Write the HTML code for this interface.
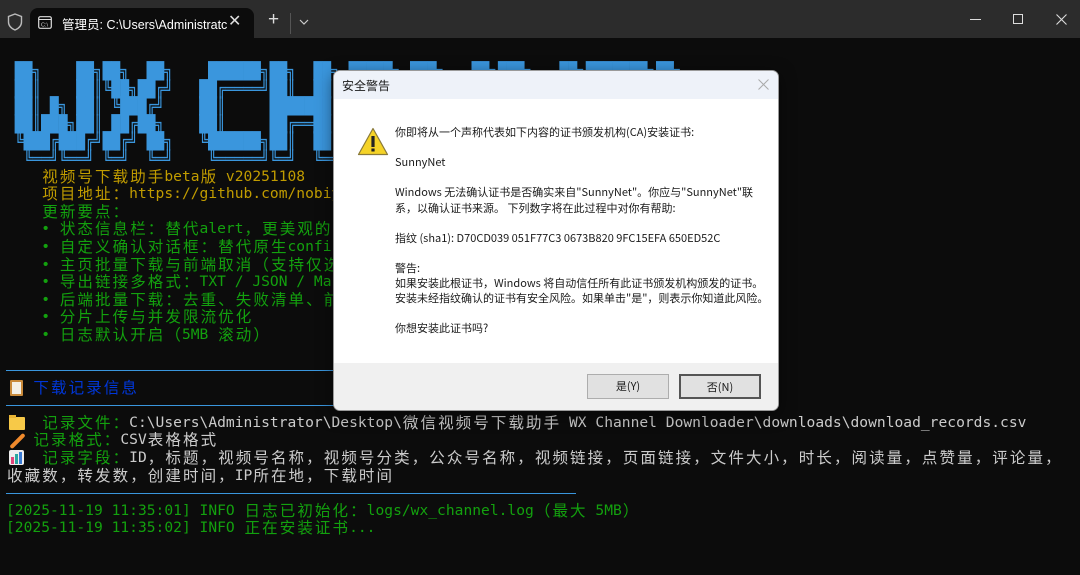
<!DOCTYPE html>
<html><head><meta charset="utf-8">
<style>
*{margin:0;padding:0;box-sizing:border-box}
html,body{width:1080px;height:575px;overflow:hidden;background:#0c0c0c}
#bar{position:absolute;left:0;top:0;width:1080px;height:38px;background:#2c2c2c}
#tab{position:absolute;left:30px;top:8px;width:224px;height:31px;background:#0c0c0c;border-radius:8px 8px 0 0}
.ui{font-family:"Liberation Sans","Noto Sans CJK SC",sans-serif;color:#fff;position:absolute}
#term{position:absolute;left:6px;top:62px;font-family:"DejaVu Sans Mono","Liberation Mono","Noto Sans CJK SC",monospace;font-size:14.6px;line-height:17.6px;color:#ccc;white-space:normal}
.row{height:17.6px;position:relative;white-space:pre;overflow:visible;line-height:17.6px}
.c{display:inline-block;width:8.8px;height:17.6px;line-height:17.6px;vertical-align:top;overflow:visible}
.w{display:inline-block;width:17.6px;height:17.6px;line-height:17.6px;vertical-align:top;font-family:"Noto Sans CJK SC",sans-serif;font-size:15.5px;text-align:center;overflow:visible}
.art{color:#3a96dd;font-family:"DejaVu Sans Mono",monospace;font-size:14.6px;line-height:17.6px;white-space:normal}
.art .row{transform:scaleY(1.12);transform-origin:top}
.y{color:#c19c00}.g{color:#13a10e}.b{color:#0037da}.wh{color:#ccc}
.sep{position:absolute;left:6px;width:570px;height:1px;background:#3a96dd}
#dlg{position:absolute;left:333px;top:70px;width:446px;height:341px;background:#fff;border:1px solid #9a9a9a;border-radius:7px;overflow:hidden;box-shadow:0 4px 16px rgba(0,0,0,.5);font-family:"Noto Sans CJK SC","Liberation Sans",sans-serif;color:#1a1a1a;font-size:11px}
#dlg .t{position:absolute;left:0;top:0;width:100%;height:28px;background:#eef2f9}
#dlg p{position:absolute;left:61px;white-space:nowrap;line-height:15px}
#dlg .bot{position:absolute;left:0;top:292px;width:100%;height:50px;background:#f0f0f0}
.btn{position:absolute;top:11px;width:82px;height:25px;border:1px solid #adadad;background:#e1e1e1;text-align:center;line-height:23px;font-size:11px}
</style></head><body>
<div id="bar"></div>
<div id="tab"></div>
<svg class="ui" style="left:7px;top:13px" width="16" height="18" viewBox="0 0 16 18"><path d="M8 1 L14.5 3.5 V9 C14.5 13 11.5 15.5 8 17 C4.5 15.5 1.5 13 1.5 9 V3.5 Z" fill="none" stroke="#bbb" stroke-width="1.4"/></svg>
<svg class="ui" style="left:38px;top:16px" width="14" height="13" viewBox="0 0 14 13"><rect x="0.7" y="0.7" width="12.6" height="11.6" rx="1.5" fill="none" stroke="#ddd" stroke-width="1.2"/><line x1="1" y1="3.5" x2="13" y2="3.5" stroke="#ddd"/><text x="3" y="10.5" font-size="5.5" fill="#ddd" font-family="Liberation Sans">C:\</text></svg>
<div class="ui" style="left:62px;top:14px;font-size:12.5px;white-space:nowrap">管理员: C:\Users\Administratc</div>
<div class="ui" style="left:228px;top:11px;font-size:16px;color:#ddd">✕</div>
<div class="ui" style="left:268px;top:9px;font-size:19px;color:#ddd">+</div>
<div style="position:absolute;left:290px;top:13px;width:1px;height:21px;background:#555"></div>
<svg class="ui" style="left:299px;top:19px" width="10" height="6"><path d="M1 1 L5 5 L9 1" fill="none" stroke="#ccc" stroke-width="1.2"/></svg>
<div style="position:absolute;left:970px;top:19px;width:11px;height:1px;background:#ddd"></div>
<div style="position:absolute;left:1013px;top:14px;width:10px;height:10px;border:1px solid #ddd"></div>
<svg class="ui" style="left:1056px;top:14px" width="11" height="11"><path d="M0.5 0.5 L10.5 10.5 M10.5 0.5 L0.5 10.5" stroke="#ddd" stroke-width="1.1"/></svg>

<div id="term"><div class="art"><div class="row"> ██╗    ██╗██╗  ██╗    ██████╗██╗  ██╗ █████╗ ███╗   ██╗███╗   ██╗███████╗██╗     </div><div class="row"> ██║    ██║╚██╗██╔╝   ██╔════╝██║  ██║██╔══██╗████╗  ██║████╗  ██║██╔════╝██║     </div><div class="row"> ██║ █╗ ██║ ╚███╔╝    ██║     ███████║███████║██╔██╗ ██║██╔██╗ ██║█████╗  ██║     </div><div class="row"> ██║███╗██║ ██╔██╗    ██║     ██╔══██║██╔══██║██║╚██╗██║██║╚██╗██║██╔══╝  ██║     </div><div class="row"> ╚███╔███╔╝██╔╝ ██╗   ╚██████╗██║  ██║██║  ██║██║ ╚████║██║ ╚████║███████╗███████╗</div><div class="row">  ╚══╝╚══╝ ╚═╝  ╚═╝    ╚═════╝╚═╝  ╚═╝╚═╝  ╚═╝╚═╝  ╚═══╝╚═╝  ╚═══╝╚══════╝╚══════╝</div></div><div class="row" data-t="y">    视频号下载助手beta版 v20251108</div><div class="row" data-t="y">    项目地址：https://github.com/nobiyou/wx_channel</div><div class="row" data-t="g">    更新要点：</div><div class="row" data-t="g">    • 状态信息栏：替代alert，更美观的提示</div><div class="row" data-t="g">    • 自定义确认对话框：替代原生confirm</div><div class="row" data-t="g">    • 主页批量下载与前端取消（支持仅选中）</div><div class="row" data-t="g">    • 导出链接多格式：TXT / JSON / Markdown</div><div class="row" data-t="g">    • 后端批量下载：去重、失败清单、前端取消</div><div class="row" data-t="g">    • 分片上传与并发限流优化</div><div class="row" data-t="g">    • 日志默认开启（5MB 滚动）</div><div class="row"></div><div class="row"></div><div class="row" data-t="b">   下载记录信息</div><div class="row"></div><div class="row" id="r1"></div><div class="row" id="r2"></div><div class="row" id="r3"></div><div class="row" data-t="wh">收藏数，转发数，创建时间，IP所在地，下载时间</div><div class="row"></div><div class="row" data-t="g">[2025-11-19 11:35:01] INFO 日志已初始化：logs/wx_channel.log（最大 5MB）</div><div class="row" data-t="g">[2025-11-19 11:35:02] INFO 正在安装证书...</div></div>
<div class="sep" style="top:370px"></div>
<div class="sep" style="top:405px"></div>
<div class="sep" style="top:493px"></div>
<!-- icons -->
<div style="position:absolute;left:10px;top:380px;width:13px;height:16px;background:#f4f0e6;border:2px solid #c98a3a;border-radius:1px"></div>
<div style="position:absolute;left:9px;top:417px;width:16px;height:13px;background:#f7c948;border-radius:1px"></div>
<div style="position:absolute;left:9px;top:415px;width:7px;height:3px;background:#e9b535"></div>
<div style="position:absolute;left:8px;top:439px;width:19px;height:4px;background:#f08a2c;transform:rotate(-45deg);border-radius:2px"></div>
<div style="position:absolute;left:9px;top:450px;width:15px;height:15px;background:#eee;border-radius:2px"></div>
<div style="position:absolute;left:11px;top:457px;width:3px;height:7px;background:#e0457b"></div>
<div style="position:absolute;left:15px;top:454px;width:3px;height:10px;background:#2aa7a0"></div>
<div style="position:absolute;left:19px;top:452px;width:3px;height:12px;background:#3a7bd5"></div>

<div id="dlg">
<div class="t"></div>
<div style="position:absolute;left:8px;top:6px;font-size:12px">安全警告</div>
<svg style="position:absolute;left:424px;top:8px" width="11" height="11"><path d="M0.5 0.5 L10.5 10.5 M10.5 0.5 L0.5 10.5" stroke="#aaa" stroke-width="1"/></svg>
<svg style="position:absolute;left:23px;top:56px" width="32" height="29" viewBox="0 0 32 29"><path d="M16 1.5 L30.5 27.5 H1.5 Z" fill="#f5d327" stroke="#8a7a3a" stroke-width="1.2" stroke-linejoin="round"/><rect x="14.4" y="9" width="3.2" height="11" fill="#222"/><rect x="14.4" y="21.5" width="3.2" height="3" fill="#222"/></svg>
<p style="top:54px">你即将从一个声称代表如下内容的证书颁发机构(CA)安装证书:</p>
<p style="top:84px">SunnyNet</p>
<p style="top:114px">Windows 无法确认证书是否确实来自"SunnyNet"。你应与"SunnyNet"联</p>
<p style="top:130px">系，以确认证书来源。 下列数字将在此过程中对你有帮助:</p>
<p style="top:160px">指纹 (sha1): D70CD039 051F77C3 0673B820 9FC15EFA 650ED52C</p>
<p style="top:190px">警告:</p>
<p style="top:205px">如果安装此根证书，Windows 将自动信任所有此证书颁发机构颁发的证书。</p>
<p style="top:220px">安装未经指纹确认的证书有安全风险。如果单击"是"，则表示你知道此风险。</p>
<p style="top:250px">你想安装此证书吗?</p>
<div class="bot"><div class="btn" style="left:253px">是(Y)</div><div class="btn" style="left:345px;border:2px solid #555">否(N)</div></div>
</div>
<script>
function isW(ch){var c=ch.codePointAt(0);return (c>=0x2E80&&c<=0x9FFF)||(c>=0xFF00&&c<=0xFF60)||(c>=0x3000&&c<=0x303F);}
function fill(el,segs){el.innerHTML='';segs.forEach(function(s){for(var ch of s[1]){var sp=document.createElement('span');sp.className=(isW(ch)?'w ':'c ')+s[0];sp.textContent=ch;el.appendChild(sp);}});}
document.querySelectorAll('#term .row[data-t]').forEach(function(r){fill(r,[[r.getAttribute('data-t'),r.textContent]]);});
fill(document.getElementById('r1'),[['g','    记录文件：'],['wh','C:\\Users\\Administrator\\Desktop\\微信视频号下载助手 WX Channel Downloader\\downloads\\download_records.csv']]);
fill(document.getElementById('r2'),[['g','   记录格式：'],['wh','CSV表格格式']]);
fill(document.getElementById('r3'),[['g','    记录字段：'],['wh','ID，标题，视频号名称，视频号分类，公众号名称，视频链接，页面链接，文件大小，时长，阅读量，点赞量，评论量，']]);
</script>
</body></html>
